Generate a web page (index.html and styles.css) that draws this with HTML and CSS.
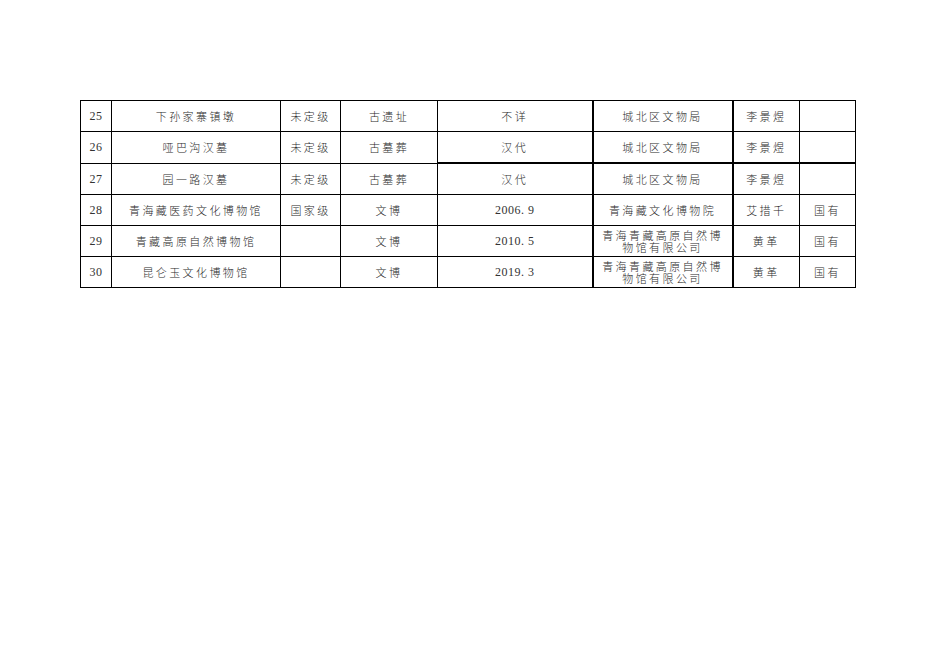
FILE: index.html
```html
<!DOCTYPE html>
<html>
<head>
<meta charset="utf-8">
<link rel="stylesheet" href="styles.css">
</head>
<body>
<table class="tbl">
  <colgroup>
    <col class="c1"><col class="c2"><col class="c3"><col class="c4"><col class="c5"><col class="c6"><col class="c7"><col class="c8">
  </colgroup>
  <tr>
    <td class="num">25</td><td>下孙家寨镇墩</td><td>未定级</td><td>古遗址</td><td>不详</td><td class="tl">城北区文物局</td><td class="tl">李景煜</td><td></td>
  </tr>
  <tr>
    <td class="num">26</td><td>哑巴沟汉墓</td><td>未定级</td><td>古墓葬</td><td class="tb">汉代</td><td class="tl tb">城北区文物局</td><td class="tl tb">李景煜</td><td class="tb"></td>
  </tr>
  <tr>
    <td class="num">27</td><td>园一路汉墓</td><td>未定级</td><td>古墓葬</td><td>汉代</td><td class="tl">城北区文物局</td><td class="tl">李景煜</td><td></td>
  </tr>
  <tr>
    <td class="num">28</td><td>青海藏医药文化博物馆</td><td>国家级</td><td>文博</td><td class="num">2006. 9</td><td class="tl">青海藏文化博物院</td><td class="tl">艾措千</td><td>国有</td>
  </tr>
  <tr>
    <td class="num">29</td><td>青藏高原自然博物馆</td><td></td><td>文博</td><td class="num">2010. 5</td><td class="tl two">青海青藏高原自然博物馆有限公司</td><td class="tl">黄革</td><td>国有</td>
  </tr>
  <tr>
    <td class="num">30</td><td>昆仑玉文化博物馆</td><td></td><td>文博</td><td class="num">2019. 3</td><td class="tl two">青海青藏高原自然博物馆有限公司</td><td class="tl">黄革</td><td>国有</td>
  </tr>
</table>
</body>
</html>
```
FILE: styles.css
```css
html, body {
  margin: 0;
  padding: 0;
  background: #ffffff;
}
body {
  padding: 100px 0 0 80px;
  font-family: "Liberation Serif", "Noto Sans CJK SC", serif;
  color: #2a2a2a;
}
.tbl {
  border-collapse: collapse;
  table-layout: fixed;
  width: 775px;
}
.c1 { width: 31px; }
.c2 { width: 169px; }
.c3 { width: 60px; }
.c4 { width: 97px; }
.c5 { width: 155px; }
.c6 { width: 140px; }
.c7 { width: 67px; }
.c8 { width: 56px; }
.tbl td {
  border: 1px solid #000;
  height: 30px;
  padding: 0 4px;
  text-align: center;
  vertical-align: middle;
  font-family: "Noto Sans CJK SC", sans-serif;
  font-size: 11px;
  letter-spacing: 2.4px;
  line-height: 12px;
  font-weight: 300;
}
.tbl td.num {
  font-family: "Liberation Serif", serif;
  font-size: 12px;
  letter-spacing: 0.5px;
  font-weight: 400;
  color: #333;
}
.tbl td.tl {
  border-left: 2px solid #000;
}
.tbl td.tb {
  border-bottom: 2px solid #000;
}
.tbl td.two {
  line-height: 12px;
  padding: 0 3px;
}
```
